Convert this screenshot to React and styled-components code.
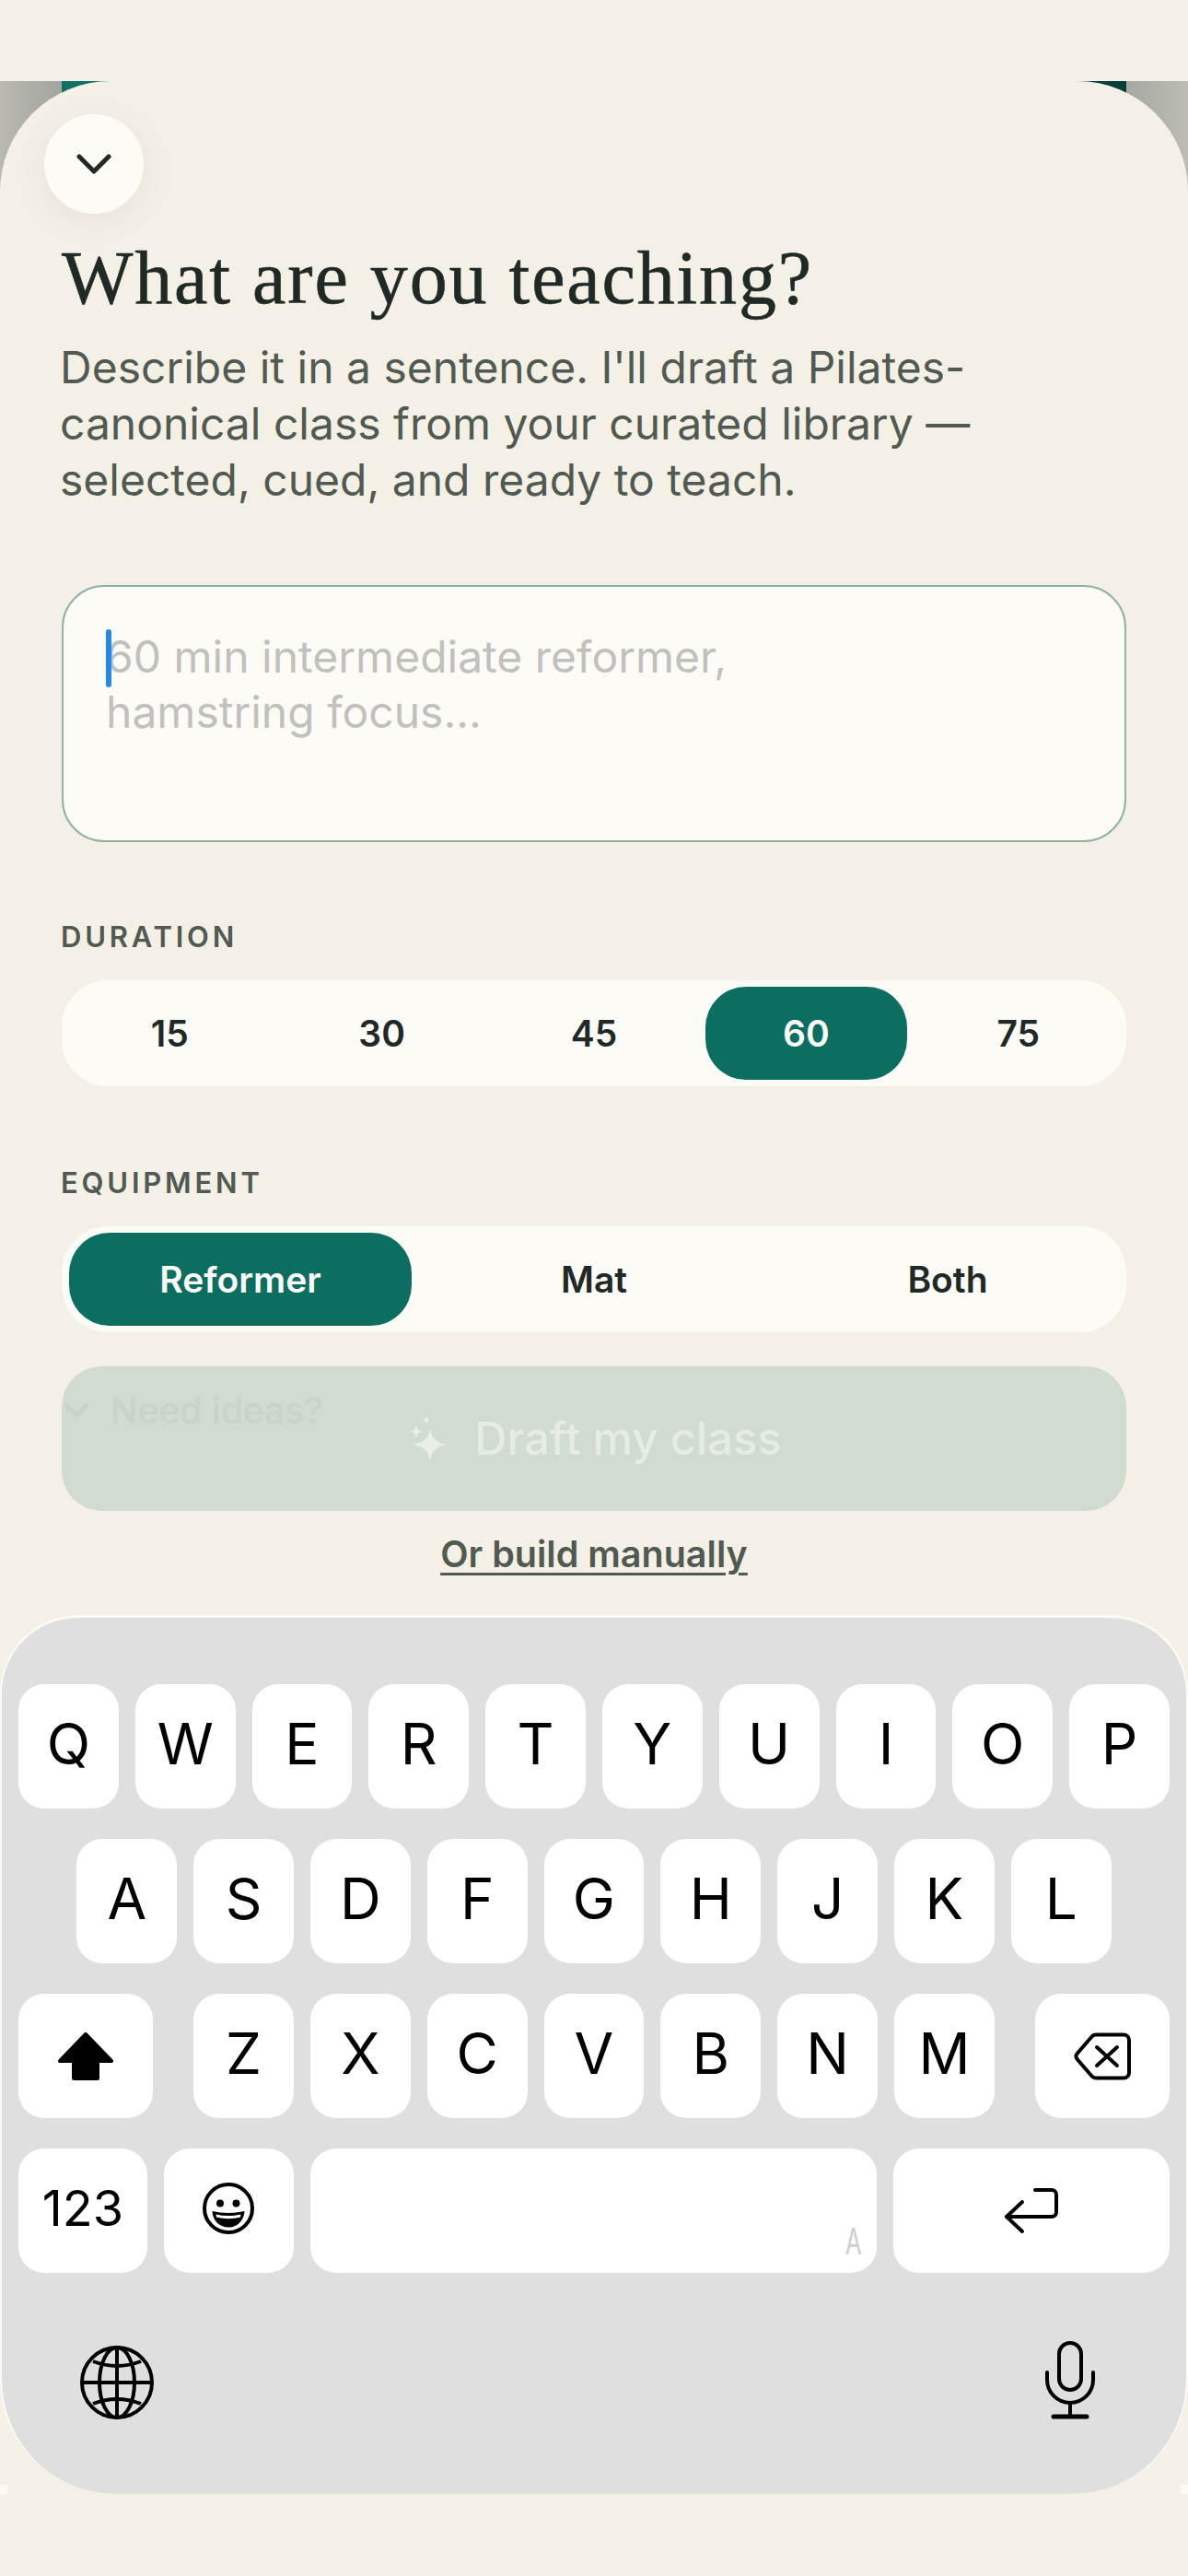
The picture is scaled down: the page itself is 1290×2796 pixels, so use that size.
import React from "react";
import styled, { createGlobalStyle } from "styled-components";

const GlobalStyle = createGlobalStyle`
  html, body {
    margin: 0;
    padding: 0;
    background: #f4f0e6;
  }
  * {
    box-sizing: border-box;
  }
`;

const DURATIONS = ["15", "30", "45", "60", "75"];
const EQUIPMENT = ["Reformer", "Mat", "Both"];
const ROW_ONE = ["Q", "W", "E", "R", "T", "Y", "U", "I", "O", "P"];
const ROW_TWO = ["A", "S", "D", "F", "G", "H", "J", "K", "L"];
const ROW_THREE = ["Z", "X", "C", "V", "B", "N", "M"];

function ChevronIcon() {
  return (
    <svg width="38" height="22" viewBox="0 0 38 22" fill="none" stroke="#1f2a27" strokeWidth="5" strokeLinecap="round" strokeLinejoin="round">
      <polyline points="3,3 19,19 35,3" />
    </svg>
  );
}

function SparkleIcon() {
  return (
    <svg width="42" height="50" viewBox="0 0 42 50" fill="#e9eee8">
      <path d="M22 12 C23 22 26 28 41 31 C26 34 23 40 22 50 C21 40 18 34 3 31 C18 28 21 22 22 12Z" />
      <path d="M7 9 C7.4 13 9 16 14 17 C9 18 7.4 21 7 25 C6.6 21 5 18 0 17 C5 16 6.6 13 7 9Z" />
      <path d="M18 0 C18.3 2.4 19.4 3.7 22 4.4 C19.4 5.1 18.3 6.4 18 9 C17.7 6.4 16.6 5.1 14 4.4 C16.6 3.7 17.7 2.4 18 0Z" />
    </svg>
  );
}

function ShiftIcon() {
  return (
    <svg width="60" height="52" viewBox="0 0 60 52" fill="#000" stroke="#000" strokeWidth="4" strokeLinejoin="round">
      <polygon points="30,2 58,31 43,31 43,50 17,50 17,31 2,31" />
    </svg>
  );
}

function BackspaceIcon() {
  return (
    <svg width="62" height="52" viewBox="0 0 62 52" fill="none" stroke="#000" strokeWidth="4" strokeLinecap="round" strokeLinejoin="round">
      <path d="M24 2.5H54a6 6 0 0 1 6 6v35a6 6 0 0 1-6 6H24a6 6 0 0 1-4.2-1.8L3.8 29.2a5 5 0 0 1 0-6.4L19.8 4.3A6 6 0 0 1 24 2.5Z" />
      <path d="M25 16 L47 36 M47 16 L25 36" />
    </svg>
  );
}

function EmojiIcon() {
  return (
    <svg width="60" height="60" viewBox="0 0 60 60" fill="none">
      <circle cx="30" cy="30" r="26" stroke="#000" strokeWidth="4" />
      <circle cx="21" cy="24.5" r="4" fill="#000" />
      <circle cx="38.5" cy="24.5" r="4" fill="#000" />
      <path d="M12.5 33 Q30 37 47.5 33 C47 44 39 50.5 30 50.5 C21 50.5 13 44 12.5 33Z" fill="#000" />
      <path d="M16.5 36.5 Q30 39.5 43.5 36.5 L43 39.5 Q30 43 17 39.5Z" fill="#fff" />
    </svg>
  );
}

function ReturnIcon() {
  return (
    <svg width="60" height="52" viewBox="0 0 60 52" fill="none" stroke="#000" strokeWidth="4" strokeLinecap="round" strokeLinejoin="round">
      <path d="M34 3 H52 a5 5 0 0 1 5 5 V27 a5 5 0 0 1 -5 5 H3" />
      <path d="M20 16 L3 32 L20 48" />
    </svg>
  );
}

function GlobeIcon() {
  return (
    <svg width="80" height="80" viewBox="0 0 80 80" fill="none" stroke="#000" strokeWidth="4">
      <circle cx="40" cy="40" r="38" />
      <ellipse cx="40" cy="40" rx="19" ry="38" />
      <path d="M40 2 V78 M2 40 H78" />
      <path d="M14 17 Q40 27 66 17 M14 63 Q40 53 66 63" />
    </svg>
  );
}

function MicIcon() {
  return (
    <svg width="56" height="85" viewBox="0 0 56 85" fill="none" stroke="#000" strokeWidth="4" strokeLinecap="round">
      <rect x="16" y="2" width="24" height="51" rx="12" />
      <path d="M3 34 V42 a25 25 0 0 0 50 0 V34" />
      <path d="M28 67 V82" />
      <path d="M10 82 H46" strokeWidth="5" />
    </svg>
  );
}

function App() {
  return (
    <Page>
      <GlobalStyle />
      <TopStrip />
      <Stage>
        <Backdrop>
          <BackdropSide />
          <BackdropButton />
          <BackdropSide $flip />
        </Backdrop>
        <Sheet>
          <CloseButton>
            <ChevronIcon />
          </CloseButton>
          <Title>What are you teaching?</Title>
          <Lead>
            Describe it in a sentence. I'll draft a Pilates-
            <br />
            canonical class from your curated library —
            <br />
            selected, cued, and ready to teach.
          </Lead>
          <Prompt>
            <Caret />
            60 min intermediate reformer,
            <br />
            hamstring focus...
          </Prompt>
          <Label $top={84}>DURATION</Label>
          <Segments>
            {DURATIONS.map((d) => (
              <Segment key={d} $active={d === "60"}>
                {d}
              </Segment>
            ))}
          </Segments>
          <Label $top={86}>EQUIPMENT</Label>
          <Segments>
            {EQUIPMENT.map((e) => (
              <Segment key={e} $active={e === "Reformer"}>
                {e}
              </Segment>
            ))}
          </Segments>
          <DraftArea>
            <DraftButton>
              <SparkleIcon />
              Draft my class
            </DraftButton>
            <Ideas>
              <svg width="28" height="16" viewBox="0 0 28 16" fill="none" stroke="#c5d3c9" strokeWidth="5" strokeLinecap="round" strokeLinejoin="round">
                <polyline points="3,3 14,13 25,3" />
              </svg>
              Need ideas?
            </Ideas>
          </DraftArea>
          <ManualLink>Or build manually</ManualLink>
        </Sheet>
        <Keyboard>
          <KeyRows>
            <KeyRow>
              {ROW_ONE.map((k) => (
                <Key key={k}>{k}</Key>
              ))}
            </KeyRow>
            <KeyRow $center>
              {ROW_TWO.map((k) => (
                <Key key={k}>{k}</Key>
              ))}
            </KeyRow>
            <KeyRow $between>
              <Key $width={146} $flat>
                <ShiftIcon />
              </Key>
              <KeyGroup>
                {ROW_THREE.map((k) => (
                  <Key key={k}>{k}</Key>
                ))}
              </KeyGroup>
              <Key $width={146} $flat>
                <BackspaceIcon />
              </Key>
            </KeyRow>
            <KeyRow>
              <Key $width={140} $small>
                123
              </Key>
              <Key $width={140.7}>
                <EmojiIcon />
              </Key>
              <Key $width={615}>
                <SpaceHint>A</SpaceHint>
              </Key>
              <Key $width={300} $flat>
                <ReturnIcon />
              </Key>
            </KeyRow>
          </KeyRows>
          <KeyboardFooter>
            <GlobeIcon />
            <MicIcon />
          </KeyboardFooter>
          <CornerTick $side="left" />
          <CornerTick $side="right" />
        </Keyboard>
      </Stage>
    </Page>
  );
}

const Page = styled.div`
  width: 1290px;
  height: 2796px;
  overflow: hidden;
  background: #f4f0e6;
  font-family: Inter, "Liberation Sans", sans-serif;
`;

const TopStrip = styled.div`
  height: 88px;
`;

const Stage = styled.div`
  position: relative;
`;

const Backdrop = styled.div`
  position: absolute;
  top: 0;
  left: 0;
  width: 100%;
  height: 130px;
  display: flex;
`;

const BackdropSide = styled.div`
  width: 67px;
  background: linear-gradient(
    ${({ $flip }) => ($flip ? "90deg, #a6a8a2, #bcbcb2" : "90deg, #b9b9af, #a2a4a0")}
  );
`;

const BackdropButton = styled.div`
  flex: 1;
  background: linear-gradient(90deg, #0f7264, #073f38);
`;

const Sheet = styled.div`
  position: relative;
  padding: 36px 67px 0;
  height: 1665px;
  background: #f4f0e6;
  border-radius: 120px 120px 0 0;
`;

const CloseButton = styled.div`
  width: 108px;
  height: 108px;
  margin-left: -19px;
  display: flex;
  align-items: center;
  justify-content: center;
  border-radius: 50%;
  background: #fcfbf6;
  box-shadow: 0 8px 36px rgba(90, 80, 50, 0.08);
`;

const Title = styled.h1`
  margin: 24px 0 0;
  height: 92px;
  font-family: "Liberation Serif", serif;
  font-size: 82px;
  line-height: 92px;
  font-weight: 400;
  letter-spacing: 1.8px;
  color: #1f2a27;
  -webkit-text-stroke: 0.6px #1f2a27;
`;

const Lead = styled.p`
  margin: 20px 0 0 -2px;
  font-size: 48px;
  line-height: 61px;
  color: #505a52;
`;

const Prompt = styled.div`
  position: relative;
  height: 279px;
  margin-top: 84px;
  padding: 46px 46px 0;
  background: #fcfbf6;
  border: 2px solid #8fb3a9;
  border-radius: 46px;
  font-size: 48px;
  line-height: 60px;
  color: #c1c1bc;
`;

const Caret = styled.span`
  position: absolute;
  left: 46px;
  top: 46px;
  width: 6px;
  height: 63px;
  border-radius: 3px;
  background: #1e88f5;
`;

const Label = styled.div`
  margin: ${({ $top }) => $top}px 0 28px -1px;
  font-size: 31px;
  line-height: 38px;
  font-weight: 600;
  letter-spacing: 3.8px;
  color: #505a52;
`;

const Segments = styled.div`
  display: flex;
  gap: 12px;
  height: 115px;
  padding: 7px 8px;
  background: #fcfbf6;
  border-radius: 50px;
`;

const Segment = styled.div`
  flex: 1;
  display: flex;
  align-items: center;
  justify-content: center;
  border-radius: 44px;
  font-size: 39px;
  font-weight: 600;
  color: ${({ $active }) => ($active ? "#fcfbf6" : "#1f2a27")};
  background: ${({ $active }) => ($active ? "#0b6e61" : "transparent")};
`;

const DraftArea = styled.div`
  position: relative;
  margin-top: 37px;
`;

const DraftButton = styled.div`
  height: 157px;
  display: flex;
  align-items: center;
  justify-content: center;
  gap: 28px;
  padding-left: 4px;
  background: #d0dbd2;
  border-radius: 44px;
  font-size: 49px;
  font-weight: 500;
  color: #e6ebe5;
`;

const Ideas = styled.div`
  position: absolute;
  top: 24px;
  left: 2px;
  display: flex;
  align-items: center;
  gap: 23px;
  font-size: 39px;
  line-height: 48px;
  font-weight: 500;
  color: #c6d4ca;
`;

const ManualLink = styled.div`
  margin-top: 23px;
  text-align: center;
  font-size: 39.5px;
  line-height: 48px;
  font-weight: 600;
  color: #505a52;
  text-decoration: underline;
  text-decoration-thickness: 3px;
  text-underline-offset: 6px;
`;

const Keyboard = styled.div`
  position: relative;
  height: 954px;
  padding: 72px 18px 0;
  background: #dfdfdf;
  border: solid #fbfaf5;
  border-width: 3px 2px 0;
  border-radius: 85px 85px 125px 125px;
`;

const KeyRows = styled.div`
  display: flex;
  flex-direction: column;
  gap: 33px;
`;

const KeyRow = styled.div`
  display: flex;
  gap: 18px;
  justify-content: ${({ $center, $between }) =>
    $center ? "center" : $between ? "space-between" : "flex-start"};
`;

const KeyGroup = styled.div`
  display: flex;
  gap: 18px;
`;

const Key = styled.div`
  position: relative;
  width: ${({ $width }) => $width || 108.8}px;
  height: 135px;
  padding-bottom: ${({ $flat }) => ($flat ? 0 : 6)}px;
  display: flex;
  align-items: center;
  justify-content: center;
  background: #fff;
  border-radius: 28px;
  font-size: ${({ $small }) => ($small ? 54 : 62)}px;
  color: #000;
`;

const SpaceHint = styled.span`
  position: absolute;
  right: 11px;
  bottom: 14px;
  font-size: 40px;
  line-height: 40px;
  color: #cfcfcf;
  transform: scaleX(0.65);
`;

const KeyboardFooter = styled.div`
  display: flex;
  align-items: flex-end;
  justify-content: space-between;
  margin-top: 74px;
  padding: 0 80px 0 67px;
`;

const CornerTick = styled.div`
  position: absolute;
  bottom: 0;
  ${({ $side }) => $side}: -2px;
  width: 8px;
  height: 10px;
  background: #fbfaf5;
`;

export default App;
